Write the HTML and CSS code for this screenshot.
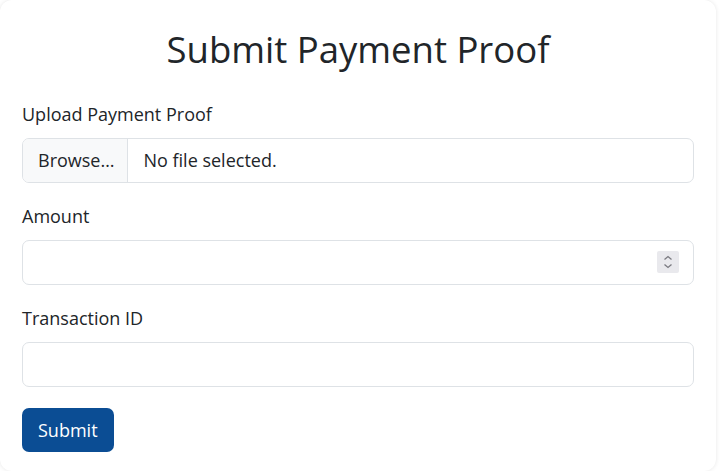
FILE: index.html
```html
<!DOCTYPE html>
<html lang="en">
<head>
<meta charset="utf-8">
<title>Submit Payment Proof</title>
<link rel="stylesheet" href="styles.css">
</head>
<body>
<div class="card">
  <h2 class="title">Submit Payment Proof</h2>
  <form class="form">
    <div class="group">
      <label class="label" for="proof">Upload Payment Proof</label>
      <label class="file-control" for="proof">
        <span class="file-btn">Browse…</span>
        <span class="file-name">No file selected.</span>
        <input class="file-input" type="file" id="proof">
      </label>
    </div>
    <div class="group">
      <label class="label" for="amount">Amount</label>
      <div class="number-wrap">
        <input class="control" type="number" id="amount">
        <span class="spin">
          <svg width="12" height="16" viewBox="0 0 12 16"><path d="M2.5 5.5 6 2.5 9.5 5.5M2.5 10.5 6 13.5 9.5 10.5" fill="none" stroke="#7a7a80" stroke-width="1.3"/></svg>
        </span>
      </div>
    </div>
    <div class="group">
      <label class="label" for="txid">Transaction ID</label>
      <input class="control" type="text" id="txid">
    </div>
    <button class="submit" type="button">Submit</button>
  </form>
</div>
</body>
</html>
```
FILE: styles.css
```css
* { box-sizing: border-box; }
html, body { margin: 0; padding: 0; background: #ffffff; }
body {
  font-family: "Open Sans", "Noto Sans", sans-serif;
  color: #212529;
  font-size: 18px;
  line-height: 28.8px;
}
.card {
  width: 716px;
  height: 471px;
  border-radius: 12px;
  background: #fff;
  box-shadow: 0 0 4px rgba(0,0,0,0.10);
  padding: 26px 22px 0 22px;
}
.title {
  margin: 0 0 28px 0;
  text-align: center;
  font-size: 36.5px;
  font-weight: 400;
  line-height: 46px;
}
.form { display: flex; flex-direction: column; align-items: flex-start; }
.group { width: 100%; margin-bottom: 18.4px; }
.label { display: block; margin-bottom: 9.6px; }
.file-control {
  display: flex;
  height: 45px;
  border: 1px solid #dee2e6;
  border-radius: 7px;
  overflow: hidden;
  cursor: pointer;
}
.file-btn {
  display: flex; align-items: center;
  padding: 0 13px 0 15px;
  background: #f8f9fa;
  border-right: 1px solid #dee2e6;
}
.file-name { display: flex; align-items: center; padding: 0 15px; }
.file-input { display: none; }
.number-wrap { position: relative; }
.control {
  display: block;
  width: 100%;
  height: 45px;
  border: 1px solid #dee2e6;
  border-radius: 7px;
  padding: 0 14px;
  font: inherit;
  color: inherit;
  background: #fff;
  -moz-appearance: textfield;
}
.control::-webkit-outer-spin-button,
.control::-webkit-inner-spin-button { -webkit-appearance: none; margin: 0; }
.spin {
  position: absolute;
  right: 15px;
  top: 11px;
  width: 22px;
  height: 22px;
  background: #e9e9ed;
  border-radius: 2px;
  display: flex; align-items: center; justify-content: center;
}
.submit {
  margin-top: 3px;
  height: 44px;
  padding: 0 16px;
  border: none;
  border-radius: 7px;
  background: #0b4d94;
  color: #fff;
  font: inherit;
}
```
